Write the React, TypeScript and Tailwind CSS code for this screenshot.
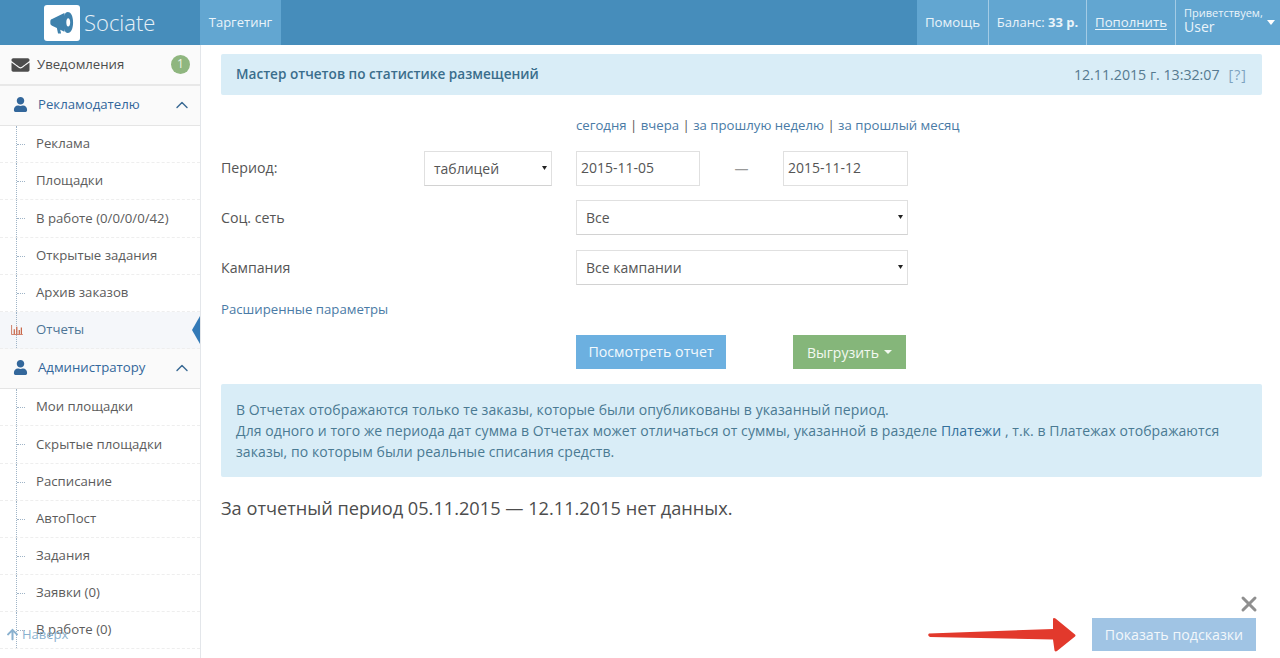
import React from "react";
import { FaEnvelope, FaUser, FaArrowUp } from "react-icons/fa";
import { ChevronUp, X } from "lucide-react";

const font = "font-['Open_Sans',sans-serif]";

function Caret({ className = "" }: { className?: string }) {
  return (
    <svg viewBox="0 0 8 6" className={className} fill="currentColor" preserveAspectRatio="none">
      <path d="M0 0h8L4 6z" />
    </svg>
  );
}

function Item({ label, active }: { label: string; active?: boolean }) {
  return (
    <div
      className={`relative flex h-[37.2px] items-center border-b border-dashed border-[#eeeeee] pl-9 text-[13.2px] ${
        active ? "bg-[#f5f7fa] text-[#4d7596]" : "text-[#5c5c5c]"
      }`}
    >
      <span className="absolute bottom-0 left-4 top-0 border-l border-dotted border-[#9fb4c7]" />
      {active ? (
        <svg viewBox="0 0 14 12" className="absolute left-[10px] top-[13px] h-[10px] w-[14px]">
          <path d="M0.5 0v11.500H14" stroke="#c9684a" fill="none" />
          <path d="M3 5h1.500v6H3zM6 2h1.500v9H6zM9 6h1.500v5H9zM11.500 3H13v8h-1.500z" fill="#c9684a" />
        </svg>
      ) : (
        <span className="absolute left-[17px] top-[18px] w-2 border-t border-dotted border-[#9fb4c7]" />
      )}
      {active && (
        <span className="absolute right-0 top-1/2 h-7 w-2 -translate-y-1/2 bg-[#337ab7] [clip-path:polygon(100%_0,100%_100%,0_50%)]" />
      )}
      {label}
    </div>
  );
}

function Group({ label }: { label: string }) {
  return (
    <div className="flex h-[40px] items-center border-b border-[#e5e5e5] bg-[#fafafa] pb-[2px] pl-[13px] pr-2 text-[#33679b]">
      <FaUser className="h-[15px] w-[15px]" />
      <span className="ml-[10px] flex-1 text-[13.2px]">{label}</span>
      <ChevronUp className="h-5 w-5 text-[#3a6a94]" strokeWidth={1.7} />
    </div>
  );
}

function Select({ label, className }: { label: string; className: string }) {
  return (
    <div
      className={`flex h-[35px] items-center justify-between border border-[#e0e0e0] border-b-[#d2d2d2] pb-[1px] pl-[9px] pr-[4px] text-[14px] text-[#555555] ${className}`}
    >
      <span>{label}</span>
      <Caret className="h-[4px] w-[5px] text-[#222222]" />
    </div>
  );
}

function Cell({ children, className = "" }: { children: React.ReactNode; className?: string }) {
  return (
    <div className={`flex h-[45px] items-center border-l border-[#a3cbe5] bg-[#62a6d1] text-[#eaf4fa] ${className}`}>
      {children}
    </div>
  );
}

const A = ({ children }: { children: React.ReactNode }) => <span className="text-[#4a7ba6]">{children}</span>;

export default function App() {
  return (
    <div className={`${font} relative h-[658px] w-[1280px] overflow-hidden bg-white`}>
      <header className="flex h-[45px] bg-[#468dbb]">
        <div className="flex w-[200px] items-center pl-11">
          <div className="flex h-9 w-9 items-center justify-center rounded-[3px] bg-white">
            <svg viewBox="0 0 24 24" className="h-[28px] w-[28px] text-[#3f82ad]" fill="currentColor">
              <path d="M2 10.500c0-1 .6-1.700 1.500-2L14 3.500c.5 2 .8 5 .8 8s-.3 6-.8 8l-3.500-1.700.7 3.200H8.600l-1-4.700-4.100-2c-.9-.4-1.500-1-1.500-2z" />
              <path
                fillRule="evenodd"
                d="M17 2.500c2.800 0 4.500 4 4.500 9s-1.700 9-4.500 9-3.600-4-3.600-9 .8-9 3.600-9zm.3 5.500c-1 0-1.600 1.500-1.600 3.500s.6 3.500 1.600 3.500 1.700-1.500 1.700-3.500S18.300 8 17.300 8z"
              />
            </svg>
          </div>
          <span className="ml-1 text-[22px] font-light text-[#e6f1f8]">Sociate</span>
        </div>
        <div className="flex w-[81px] items-center justify-center bg-[#62a6d1] text-[13px] text-[#eaf4fa]">Таргетинг</div>
        <div className="ml-auto flex">
          <Cell className="w-[71px] justify-center border-l-0 text-[13.3px]">Помощь</Cell>
          <Cell className="w-[98px] justify-center text-[13px]">
            Баланс:&nbsp;<b className="font-bold">33 р.</b>
          </Cell>
          <Cell className="w-[89px] justify-center text-[13.2px]">
            <span className="underline underline-offset-2">Пополнить</span>
          </Cell>
          <Cell className="relative w-[105px] pl-2">
            <div className="-mt-[5px] flex flex-col leading-[14px]">
              <span className="text-[11px]">Приветствуем,</span>
              <span className="text-[14px]">User</span>
            </div>
            <Caret className="absolute right-[5px] top-[20px] h-[5px] w-[8px] text-white" />
          </Cell>
        </div>
      </header>

      <div className="flex h-[613px]">
        <aside className="h-full w-[201px] shrink-0 overflow-hidden border-r border-[#e3e6ea]">
          <div className="flex h-[41px] items-center border-b-2 border-[#e8e8e8] bg-[#fafafa] pl-[11px] pr-[10px] text-[#4d4d4d]">
            <FaEnvelope className="h-[18px] w-[19px]" />
            <span className="ml-[7px] mt-[1px] flex-1 text-[13.2px] font-medium">Уведомления</span>
            <span className="mb-[1px] flex h-[19px] w-[19px] items-center justify-center rounded-full bg-[#8fb67f] text-[12px] text-[#eef5ea]">1</span>
          </div>
          <Group label="Рекламодателю" />
          <Item label="Реклама" />
          <Item label="Площадки" />
          <Item label="В работе (0/0/0/0/42)" />
          <Item label="Открытые задания" />
          <Item label="Архив заказов" />
          <Item label="Отчеты" active />
          <Group label="Администратору" />
          <Item label="Мои площадки" />
          <Item label="Скрытые площадки" />
          <Item label="Расписание" />
          <Item label="АвтоПост" />
          <Item label="Задания" />
          <Item label="Заявки (0)" />
          <Item label="В работе (0)" />
        </aside>

        <main className="w-[1061px] pl-5 pt-[9px] text-[14px] text-[#555555]">
          <div className="flex h-[41px] items-center justify-between rounded-[2px] bg-[#d9edf7] pl-[15px] pr-[15px] text-[#31708f]">
            <span className="text-[13.6px] font-semibold text-[#3a6d8c]">Мастер отчетов по статистике размещений</span>
            <span className="text-[14.2px] text-[#567a90]">
              12.11.2015 г. 13:32:07<span className="ml-[9px] text-[#7ea3bf] tracking-[1px]">[?]</span>
            </span>
          </div>

          <div className="mt-[21px] pl-[355px] text-[13.2px] leading-[18px] text-[#555555]">
            <A>сегодня</A> | <A>вчера</A> | <A>за прошлую неделю</A> | <A>за прошлый месяц</A>
          </div>

          <div className="mt-[17px] flex items-center">
            <span className="w-[203px] pb-[1px] text-[14.2px]">Период:</span>
            <Select label="таблицей" className="w-[128px]" />
            <div className="ml-6 flex h-[35px] w-[124px] items-center border border-[#e0e0e0] pb-[2px] pl-[4px] text-[#555555]">2015-11-05</div>
            <span className="w-[83px] text-center text-[#999999]">—</span>
            <div className="flex h-[35px] w-[125px] items-center border border-[#e0e0e0] pb-[2px] pl-[4px] text-[#555555]">2015-11-12</div>
          </div>

          <div className="mt-[14px] flex items-center">
            <span className="w-[355px] text-[14.2px]">Соц. сеть</span>
            <Select label="Все" className="w-[332px]" />
          </div>

          <div className="mt-[15px] flex items-center">
            <span className="w-[355px] text-[14.2px]">Кампания</span>
            <Select label="Все кампании" className="w-[332px]" />
          </div>

          <div className="mt-[14px] h-[20px] text-[13.2px] leading-[20px] text-[#4a7ba6]">Расширенные параметры</div>

          <div className="mt-[16px] flex pl-[355px]">
            <div className="flex h-[34px] w-[150px] items-center justify-center bg-[#6cb0e0] text-[14.2px] font-medium text-[#f3f9fd]">Посмотреть отчет</div>
            <div className="ml-[67px] flex h-[34px] w-[113px] items-center justify-center bg-[#85b67a] text-[14px] font-medium text-[#f3f9f1]">
              Выгрузить
              <Caret className="ml-[5px] h-[4px] w-[8px]" />
            </div>
          </div>

          <div className="mt-[15px] h-[93px] rounded-[2px] bg-[#d9edf7] px-[15px] pt-[15px] text-[14px] leading-[21px] tracking-[0.08px] text-[#4a7a93]">
            В Отчетах отображаются только те заказы, которые были опубликованы в указанный период.
            <br />
            Для одного и того же периода дат сумма в Отчетах может отличаться от суммы, указанной в разделе <span className="text-[#33709b]">Платежи</span> , т.к. в Платежах отображаются заказы, по которым были реальные списания средств.
          </div>

          <div className="mt-[19px] text-[18.2px] leading-6 text-[#4d4d4d]">За отчетный период 05.11.2015 — 12.11.2015 нет данных.</div>
        </main>
      </div>

      <div className="absolute left-[6px] top-[625px] flex items-center text-[13px] text-[#8ab1cf]">
        <FaArrowUp className="h-[13px] w-[13px]" />
        <span className="ml-[3px]">Наверх</span>
      </div>

      <svg viewBox="0 0 152 36" className="absolute left-[926px] top-[617px] h-9 w-[152px]">
        <path
          d="M3 16.500 L127 12 L127 1.500 Q128 0.500 129.500 1.500 L149 17.500 Q150 18.500 149 19.500 L131 34 Q129.500 35 128.500 33.500 L127 22.500 L4 20 Q1 18.500 3 16.500z"
          fill="#e2392c"
        />
      </svg>

      <X className="absolute left-[1237px] top-[592px] h-6 w-6 text-[#8f8f8f]" strokeWidth={3} />

      <div className="absolute left-[1092px] top-[618px] flex h-[33px] w-[164px] items-center justify-center bg-[#a0c4e4] text-[14.2px] font-medium text-[#f2f7fb]">
        Показать подсказки
      </div>
    </div>
  );
}
